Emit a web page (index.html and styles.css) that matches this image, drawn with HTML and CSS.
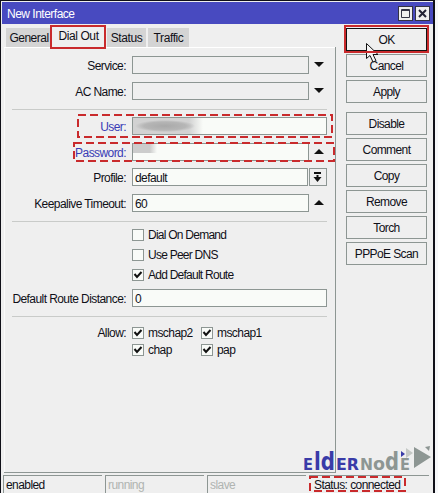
FILE: index.html
```html
<!DOCTYPE html>
<html lang="en">
<head>
<meta charset="utf-8">
<title>New Interface</title>
<link rel="stylesheet" href="styles.css">
</head>
<body>
<div class="window">
  <header class="titlebar">
    <span class="title">New Interface</span>
    <span class="winbtn"><svg width="13" height="13"><path d="M2.5 2.5h8v8h-8zM2.5 3.5h8" fill="none" stroke="#334"/></svg></span>
    <span class="winbtn"><svg width="13" height="13"><path d="M3 3l7 7M10 3l-7 7" fill="none" stroke="#223" stroke-width="2"/></svg></span>
  </header>
  <div class="content">
    <main class="left">
      <nav class="tabs">
        <span class="tab general">General</span>
        <span class="tab active">Dial Out</span>
        <span class="tab status">Status</span>
        <span class="tab traffic">Traffic</span>
      </nav>
      <section class="panel">
        <div class="row"><label>Service:</label><span class="input off short"></span><i class="arrow down"></i></div>
        <div class="row"><label>AC Name:</label><span class="input off short"></span><i class="arrow down"></i></div>
        <hr>
        <div class="row user"><label class="blue">User:</label><span class="input"><b class="smudge"></b></span></div>
        <div class="row"><label class="blue">Password:</label><span class="input short"><b class="smudge small"></b></span><i class="arrow"></i></div>
        <div class="row profile"><label>Profile:</label><span class="input short">default</span><span class="drop"><svg width="16" height="16"><path d="M4 4h7M7.500 6v3" stroke="#111" stroke-width="2" fill="none"/><path d="M3.500 8h8l-4 5z" fill="#111"/></svg></span></div>
        <div class="row"><label>Keepalive Timeout:</label><span class="input short">60</span><i class="arrow"></i></div>
        <hr>
        <div class="checks">
          <div class="check"><span class="box"></span>Dial On Demand</div>
          <div class="check"><span class="box"></span>Use Peer DNS</div>
          <div class="check"><span class="box"><svg width="10" height="10"><path d="M1.5 4l2.5 3 4.500-5" /></svg></span>Add Default Route</div>
        </div>
        <div class="row distance"><label>Default Route Distance:</label><span class="input">0</span></div>
        <hr>
        <div class="allow">
          <label>Allow:</label>
          <div class="check"><span class="box"><svg width="10" height="10"><path d="M1.5 4l2.500 3 4.500-5"/></svg></span>mschap2</div>
          <div class="check"><span class="box"><svg width="10" height="10"><path d="M1.5 4l2.500 3 4.500-5"/></svg></span>mschap1</div>
          <span></span>
          <div class="check"><span class="box"><svg width="10" height="10"><path d="M1.5 4l2.500 3 4.500-5"/></svg></span>chap</div>
          <div class="check"><span class="box"><svg width="10" height="10"><path d="M1.5 4l2.500 3 4.500-5"/></svg></span>pap</div>
        </div>
      </section>
    </main>
    <aside class="buttons">
      <button class="ok">OK</button>
      <button>Cancel</button>
      <button>Apply</button>
      <button class="gap">Disable</button>
      <button>Comment</button>
      <button>Copy</button>
      <button>Remove</button>
      <button>Torch</button>
      <button>PPPoE Scan</button>
    </aside>
  </div>
  <footer class="statusbar">
    <span>enabled</span><span class="dim">running</span><span class="dim">slave</span><span class="conn">Status: connected</span>
  </footer>
</div>
<svg class="overlay" width="438" height="493">
  <path d="M366.500 43.500v15l3.500-3 3 6.500 3-1.300-3-6.200h5z" fill="#f4f4f4" stroke="#111"/>
  <g class="frame">
    <rect x="51" y="26" width="54" height="22"/>
    <rect x="345" y="26" width="83" height="26"/>
  </g>
  <g class="frame dashed">
    <rect x="78" y="115" width="254" height="22"/>
    <rect x="74" y="143" width="260" height="18"/>
    <rect x="310" y="477" width="95" height="14"/>
  </g>
  <g class="logo">
    <g class="navy">
      <text x="303" y="470" class="sm" textLength="10" lengthAdjust="spacingAndGlyphs">E</text>
      <text x="314" y="470" class="lg" textLength="21" lengthAdjust="spacingAndGlyphs">ld</text>
      <text x="336" y="470" class="sm" textLength="23" lengthAdjust="spacingAndGlyphs">ER</text>
    </g>
    <g class="grey">
      <text x="360" y="470" class="sm" textLength="13" lengthAdjust="spacingAndGlyphs">N</text>
      <text x="373" y="470" class="o" textLength="12" lengthAdjust="spacingAndGlyphs">o</text>
      <text x="385" y="470" class="lg" textLength="14" lengthAdjust="spacingAndGlyphs">d</text>
      <text x="400" y="470" class="sm" textLength="10" lengthAdjust="spacingAndGlyphs">E</text>
    </g>
    <path class="greyfill" d="M414 447l17 10-17 11zM425 447l5-1-1 5z"/>
    <path d="M406 448l7 5-7 5z" fill="#c4c8c5"/>
    <path class="navyfill" d="M401 451l4 3-4 3z"/>
  </g>
</svg>
</body>
</html>
```
FILE: styles.css
```css
* { box-sizing: border-box; }
body { margin: 0; width: 438px; height: 493px; overflow: hidden; background: #f7f8fa; font: 12px/14px "Liberation Sans", sans-serif; letter-spacing: -0.57px; color: #101018; }
.window { width: 435px; height: 493px; background: #efefef; border: solid #101018; border-width: 1px 2px 0 1px; display: flex; flex-direction: column; }
.titlebar { height: 22px; margin-top: 1px; background: #484ac0; display: flex; align-items: center; gap: 2px; padding: 0 3px 0 5px; margin-left: 1px; color: #fff; flex: none; }
.title { flex: 1; letter-spacing: -0.5px; padding-top: 2px; }
.winbtn { width: 15px; height: 15px; background: #eee; border: 1px solid #334; display: flex; }
.content { display: flex; height: 449px; flex: none; }
.left { width: 335px; height: 449px; display: flex; flex-direction: column; padding-left: 3px; }
.tabs { display: flex; height: 23px; padding: 4px 0 0 2px; flex: none; }
.tab { background: #d4d4d4; height: 19px; padding: 3px 0 0; text-align: center; }
.general { width: 44px; padding-left: 2px; letter-spacing: -0.5px; }
.active { width: 57px; background: #efefef; margin-top: -3px; height: 22px; padding: 4px 0 0; letter-spacing: -0.4px; }
.status { width: 39px; letter-spacing: -0.4px; }
.traffic { width: 41px; margin-left: 2px; letter-spacing: -0.4px; }
.panel { flex: 1; border: solid #8d9693; border-width: 0 1px 1px 0; padding: 9px 8px 0 8px; box-shadow: inset 0 1px #fff, inset 1px 0 #fafafa; }
.row { display: flex; height: 18px; margin-bottom: 8px; }
.row label { width: 114px; text-align: right; padding-top: 3px; white-space: nowrap; }
.input { width: 195px; margin-left: 6px; background: #f9fbf8; border: 1px solid #8d9693; padding: 2px 2px; }
.off { background: #efefef; }
.short { width: 177px; }
.arrow { width: 0; height: 0; border: 5px solid transparent; border-top: 0; border-bottom: 5px solid #111; margin: 6px 0 0 5px; }
.arrow.down { border-top: 5px solid #111; border-bottom: 0; }
hr { border: 0; height: 1px; background: #c9cbc9; margin: 9px 0 7px; }
.blue { color: #393bb5; }
.smudge { display: block; width: 70px; height: 16px; background: radial-gradient(ellipse 30px 6px at 32px 8px, #a9a9a9 0, #b6b6b6 70%, transparent 100%), linear-gradient(90deg, #d2d2d2 80%, #f9fbf8); margin: -2px 0 0 -2px; }
.small { width: 24px; height: 9px; background: linear-gradient(90deg, #ccc 70%, #f9fbf8); }
.profile { margin-top: -1px; }
.profile .short { width: 176px; }
.drop { width: 18px; border: 1px solid #8d9693; margin-left: 1px; }
.checks { margin-left: 120px; letter-spacing: -0.75px; }
.check { display: flex; align-items: center; height: 12px; gap: 4px; }
.checks .check { margin-bottom: 8px; }
.box { width: 12px; height: 12px; background: #f9fbf8; border: 1px solid #8d9693; display: flex; }
.box path { fill: none; stroke: #111; stroke-width: 2; }
.allow { display: grid; grid-template-columns: 114px 63px 80px; column-gap: 6px; row-gap: 5px; margin-top: 10px; }
.allow label { text-align: right; height: 12px; line-height: 13px; }
.buttons { width: 81px; margin: 4px 0 0 10px; display: flex; flex-direction: column; gap: 3px; }
button { height: 23px; flex: none; background: #efefef; border: 1px solid #8d9693; font: inherit; letter-spacing: -.6px; color: inherit; padding: 0; }
.ok { border-color: #111; }
.gap { margin-top: 6px; }
.statusbar { display: flex; gap: 3px; margin: 2px 4px 0 2px; height: 18px; }
.statusbar span { width: 99px; border: solid #8d9693; border-width: 1px 0 0 1px; padding: 2px 0 0 2px; }
.statusbar .conn { flex: 1; border-left: 0; padding-left: 5px; }
.statusbar .dim { color: #b0b4b1; }
.overlay { position: absolute; left: 0; top: 0; }
.frame { fill: none; stroke: #c92a2c; stroke-width: 2; }
.dashed { stroke-dasharray: 8 4; }
.logo { font-family: "DejaVu Sans", sans-serif; font-weight: bold; letter-spacing: 0; }
.sm { font-size: 15px; }
.o { font-size: 18px; }
.lg { font-size: 25px; }
.navy, .navyfill { fill: #393ba8; }
.grey, .greyfill { fill: #8d9693; }
```
